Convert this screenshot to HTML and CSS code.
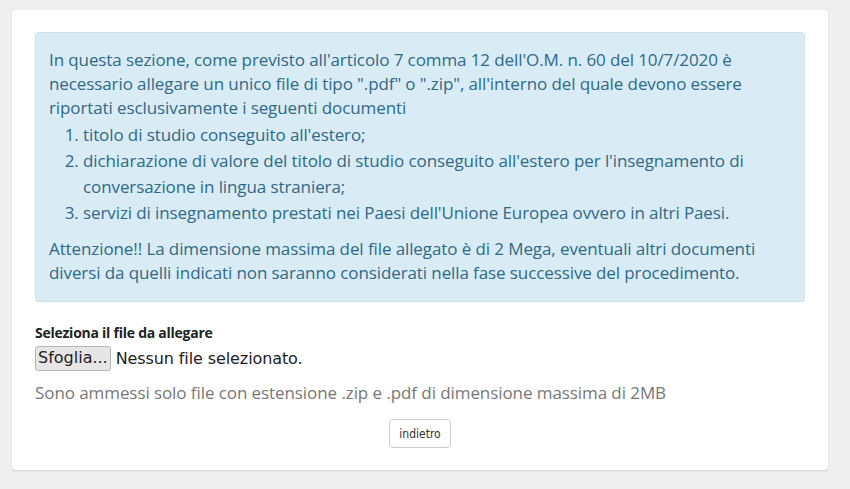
FILE: index.html
```html
<!DOCTYPE html>
<html lang="it">
<head>
<meta charset="utf-8">
<link rel="stylesheet" href="styles.css">
</head>
<body>
<div class="card">
  <div class="alert">
    <p class="intro">In questa sezione, come previsto all'articolo 7 comma 12 dell'O.M. n. 60 del 10/7/2020 è necessario allegare un unico file di tipo ".pdf" o ".zip", all'interno del quale devono essere riportati esclusivamente i seguenti documenti</p>
    <ol class="docs">
      <li>titolo di studio conseguito all'estero;</li>
      <li>dichiarazione di valore del titolo di studio conseguito all'estero per l'insegnamento di conversazione in lingua straniera;</li>
      <li>servizi di insegnamento prestati nei Paesi dell'Unione Europea ovvero in altri Paesi.</li>
    </ol>
    <p class="warn">Attenzione!! La dimensione massima del file allegato è di 2 Mega, eventuali altri documenti diversi da quelli indicati non saranno considerati nella fase successive del procedimento.</p>
  </div>
  <div class="field">
    <label class="label">Seleziona il file da allegare</label>
    <div class="file-row">
      <span class="browse">Sfoglia...</span>
      <span class="none">Nessun file selezionato.</span>
    </div>
    <p class="help">Sono ammessi solo file con estensione .zip e .pdf di dimensione massima di 2MB</p>
  </div>
  <div class="actions">
    <button class="back">indietro</button>
  </div>
</div>
</body>
</html>
```
FILE: styles.css
```css
html, body {
  margin: 0;
  padding: 0;
}
body {
  background: #efefef;
  font-family: "Open Sans", "Noto Sans", sans-serif;
  width: 850px;
  height: 489px;
  overflow: hidden;
}
.card {
  margin: 10px 0 0 12px;
  width: 816px;
  height: 460px;
  box-sizing: border-box;
  background: #fff;
  border-radius: 4px;
  box-shadow: 0 1px 2px rgba(0,0,0,0.12);
  padding: 22px 23px 0 23px;
}
.alert {
  background: #d9ecf6;
  border: 1px solid #cde4ef;
  border-radius: 3px;
  color: #2f6986;
  font-size: 17px;
  letter-spacing: -0.1px;
  padding: 15px 40px 16px 13px;
  height: 270px;
  box-sizing: border-box;
}
.intro, .warn {
  margin: 0;
  line-height: 24px;
}
.docs {
  margin: 2px 0 11px 0;
  padding-left: 34px;
  line-height: 26px;
}
.field {
  margin-top: 22px;
}
.label {
  display: block;
  font-size: 14px;
  font-weight: 700;
  color: #222;
  letter-spacing: -0.25px;
  line-height: 18px;
}
.file-row {
  display: flex;
  align-items: center;
  gap: 5px;
  margin-top: 4px;
  font-family: "DejaVu Sans", sans-serif;
  font-size: 16px;
  color: #222;
}
.browse {
  display: inline-block;
  background: #e6e6e6;
  border: 1px solid #b4b4b4;
  border-radius: 3px;
  padding: 1px 2px 2px 2px;
  line-height: 20px;
}
.none {
  letter-spacing: -0.1px;
}
.help {
  margin: 10px 0 0 0;
  font-size: 17px;
  color: #777;
  letter-spacing: -0.08px;
  line-height: 24px;
}
.actions {
  display: flex;
  justify-content: center;
  margin-top: 14px;
}
.back {
  width: 62px;
  height: 29px;
  background: #fff;
  border: 1px solid #ccc;
  border-radius: 4px;
  font-family: "DejaVu Sans Condensed", "Open Sans", sans-serif;
  font-size: 12px;
  color: #333;
  padding: 0;
}
```
